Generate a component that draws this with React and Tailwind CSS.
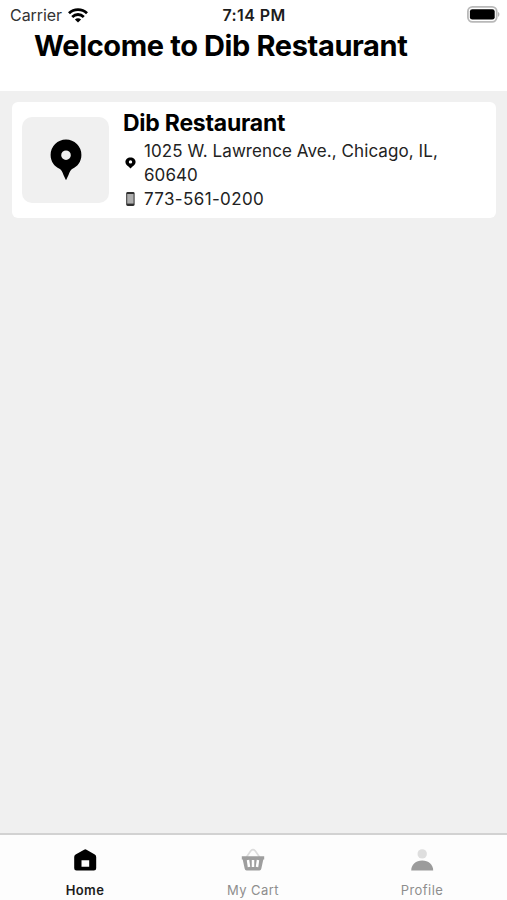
import React, { useState } from "react";

function WifiIcon() {
  return (
    <svg width="20" height="15" viewBox="0 0 20 15" fill="none" stroke="#000" strokeWidth="2.8">
      <path d="M1 5.2C6 0.3 14 0.3 19 5.2" />
      <path d="M4.2 8.9C7.6 5.7 12.4 5.7 15.8 8.9" />
      <path d="M10 14.6L6.9 11.4C8.7 9.8 11.3 9.8 13.1 11.4Z" fill="#000" stroke="none" />
    </svg>
  );
}

function BatteryIcon() {
  return (
    <svg width="33" height="17" viewBox="0 0 33 17">
      <rect x="0.9" y="0.9" width="28.8" height="15" rx="4.6" fill="#fff" stroke="#b9b9b9" strokeWidth="1.8" />
      <rect x="2.9" y="3.2" width="24.8" height="10.4" rx="2.4" fill="#000" />
      <path d="M31.1 6C32.8 6.7 32.8 10 31.1 10.8Z" fill="#aaa" />
    </svg>
  );
}

function PinIcon() {
  return (
    <svg width="32" height="42" viewBox="0 0 32 42">
      <path
        fillRule="evenodd"
        d="M16 0.5A15.4 15.4 0 0 1 31.4 15.9C31.4 22.5 27.6 27.3 22.5 29.8C20.5 31 19.5 33 18.5 36L16 41.2L13.5 36C12.5 33 11.5 31 9.5 29.8C4.4 27.3 0.6 22.5 0.6 15.9A15.4 15.4 0 0 1 16 0.5ZM16 11.4A4.8 4.8 0 1 0 16 21A4.8 4.8 0 1 0 16 11.4Z"
        fill="#000"
      />
    </svg>
  );
}

function SmallPinIcon() {
  return (
    <svg width="11" height="12" viewBox="0 0 11 12">
      <path
        fillRule="evenodd"
        d="M5.5 0.5C8.5 0.5 10.6 2.5 10.6 5C10.6 7.2 8.8 8.4 7.5 9.6L5.5 11.4L3.5 9.6C2.2 8.4 0.4 7.2 0.4 5C0.4 2.5 2.5 0.5 5.5 0.5ZM5.5 3.2A1.7 1.7 0 1 0 5.5 6.6A1.7 1.7 0 1 0 5.5 3.2Z"
        fill="#000"
      />
    </svg>
  );
}

function PhoneIcon() {
  return (
    <svg width="9" height="14" viewBox="0 0 9 14">
      <rect x="0.2" y="0" width="8.4" height="14" rx="1.4" fill="#2e2e2e" />
      <rect x="1.2" y="2" width="6.4" height="9.6" fill="#adadad" />
    </svg>
  );
}

function HomeIcon() {
  return (
    <svg width="24" height="24" viewBox="0 0 24 24">
      <path
        fillRule="evenodd"
        d="M11.1 1.7Q12.3 0.9 13.5 1.7L21.8 6.6Q23.2 7.5 23.2 9V20.2Q23.2 22.5 20.9 22.5H3.5Q1.2 22.5 1.2 20.2V9Q1.2 7.5 2.6 6.6ZM8.5 12.3V18.8H16.2V12.3Z"
        fill="#000"
      />
    </svg>
  );
}

function BasketIcon() {
  return (
    <svg width="24" height="24" viewBox="0 0 24 24">
      <path d="M5.5 9L9.8 2.8Q12 0.6 14.2 2.8L18.5 9" fill="none" stroke="#dcdcdc" strokeWidth="1.7" />
      <path
        d="M0.8 8.3H23.2V11.5H22.3L20.3 20.8Q20 22.4 18.4 22.4H5.6Q4 22.4 3.7 20.8L1.7 11.5H0.8Z"
        fill="#9e9e9e"
      />
      <path d="M7 12L8 19M12 12V19M17 12L16 19" stroke="#fff" strokeWidth="2.5" />
    </svg>
  );
}

function ProfileIcon() {
  return (
    <svg width="24" height="24" viewBox="0 0 24 24">
      <circle cx="12.2" cy="5.9" r="4.7" fill="#dedede" />
      <path d="M1.2 22.5C1.2 16.5 6 12.5 12.2 12.5C18.4 12.5 23.2 16.5 23.2 22.5Z" fill="#9b9b9b" />
    </svg>
  );
}

const tabs = [
  { name: "Home", icon: HomeIcon },
  { name: "My Cart", icon: BasketIcon },
  { name: "Profile", icon: ProfileIcon },
];

export default function App() {
  const [activeTab, setActiveTab] = useState("Home");

  return (
    <div className="flex h-[900px] w-[507px] flex-col overflow-hidden bg-[#f0f0f0] font-['Inter',sans-serif] text-black">
      {/* Header */}
      <header className="h-[91px] shrink-0 bg-white">
        <div className="grid h-[30px] grid-cols-3 items-center pr-[7px] pl-[10px]">
          <div className="flex items-center gap-[6px]">
            <span className="text-[16px] tracking-[-0.05px] text-[#333]">Carrier</span>
            <WifiIcon />
          </div>
          <span className="pr-[2px] text-center text-[16px] font-semibold tracking-[0.4px] text-[#1c1c1c]">
            7:14 PM
          </span>
          <div className="flex justify-end pb-[2px]">
            <BatteryIcon />
          </div>
        </div>
        <h1 className="pl-[34px] text-[29px] leading-[32px] font-bold tracking-[-0.38px] whitespace-nowrap">
          Welcome to Dib Restaurant
        </h1>
      </header>

      {/* Restaurant card */}
      <main className="flex-1 pt-[11px] pr-[11px] pl-3">
        <div className="flex h-[116px] items-center rounded-[6px] bg-white pl-[10px]">
          <div className="flex h-[86px] w-[87px] shrink-0 items-center justify-center rounded-[10px] bg-[#f0f0f0]">
            <PinIcon />
          </div>
          <div className="ml-[14px] flex flex-col">
            <h2 className="mb-[2px] text-[23px] leading-[28px] font-bold tracking-[-0.24px]">Dib Restaurant</h2>
            <div className="flex items-center">
              <div className="flex w-[21px] pl-[2px]">
                <SmallPinIcon />
              </div>
              <p className="w-[320px] text-[17px] leading-[24px] tracking-[0.08px] text-[#222]">
                1025 W. Lawrence Ave., Chicago, IL, 60640
              </p>
            </div>
            <div className="flex items-center">
              <div className="flex w-[21px] pl-[3px]">
                <PhoneIcon />
              </div>
              <p className="text-[17px] leading-[24px] tracking-[0.36px] text-[#222]">773-561-0200</p>
            </div>
          </div>
        </div>
      </main>

      {/* Tab bar */}
      <nav className="grid h-[67px] shrink-0 grid-cols-3 border-t-2 border-[#d2d2d2] bg-[#fdfdfd]">
        {tabs.map(({ name, icon: Icon }) => (
          <button
            key={name}
            onClick={() => setActiveTab(name)}
            className={`flex flex-col items-center pt-[13px] text-[13px] leading-[16px] ${
              activeTab === name
                ? "pl-px font-semibold tracking-[0.4px] text-[#1c1c1c]"
                : "pr-px font-normal tracking-[0.45px] text-[#8e8e8e]"
            }`}
          >
            <Icon />
            <span className="mt-[10px]">{name}</span>
          </button>
        ))}
      </nav>
    </div>
  );
}
